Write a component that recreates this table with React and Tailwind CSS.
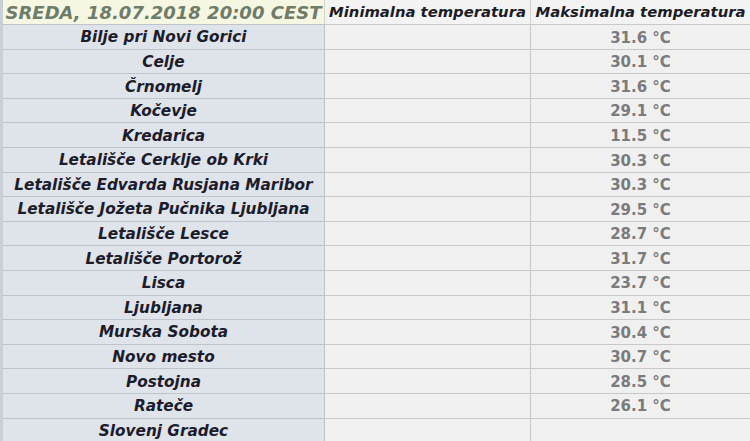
const rows = [
  ['Bilje pri Novi Gorici', '31.6 °C'],
  ['Celje', '30.1 °C'],
  ['Črnomelj', '31.6 °C'],
  ['Kočevje', '29.1 °C'],
  ['Kredarica', '11.5 °C'],
  ['Letališče Cerklje ob Krki', '30.3 °C'],
  ['Letališče Edvarda Rusjana Maribor', '30.3 °C'],
  ['Letališče Jožeta Pučnika Ljubljana', '29.5 °C'],
  ['Letališče Lesce', '28.7 °C'],
  ['Letališče Portorož', '31.7 °C'],
  ['Lisca', '23.7 °C'],
  ['Ljubljana', '31.1 °C'],
  ['Murska Sobota', '30.4 °C'],
  ['Novo mesto', '30.7 °C'],
  ['Postojna', '28.5 °C'],
  ['Rateče', '26.1 °C'],
  ['Slovenj Gradec', ''],
];

const App = () => {
  return (
    <div className="w-[750px] h-[441px] overflow-hidden bg-[#f0f0f0] font-['DejaVu_Sans',sans-serif]">
      <div className="flex border-l-[3px] border-[#c9ced8]">
        <div className="w-[322px] h-[24px] flex items-center justify-center bg-[#f6f7e2] border-r border-[#d4d6c8] text-[18px] font-bold italic text-[#6e7c69] whitespace-nowrap">
          SREDA, 18.07.2018 20:00 CEST
        </div>
        <div className="w-[206px] h-[24px] flex items-center justify-center bg-[#f3f3f3] border-r border-[#cfcfcf] text-[14.8px] font-bold italic text-[#1c1c24] whitespace-nowrap">
          Minimalna temperatura
        </div>
        <div className="flex-1 h-[24px] flex items-center justify-center bg-[#f3f3f3] text-[14.8px] font-bold italic text-[#1c1c24] whitespace-nowrap">
          Maksimalna temperatura
        </div>
      </div>
      {rows.map(([name, max]) => (
        <div key={name} className="flex h-[24.6px] border-l-[3px] border-[#c9ced8]">
          <div className="w-[322px] flex items-center justify-center pt-[2px] bg-[#dfe3ea] border-t border-r border-[#bfc3cb] text-[15.3px] font-bold italic text-[#1c1c2a] whitespace-nowrap">
            {name}
          </div>
          <div className="w-[206px] bg-[#f0f0f0] border-t border-r border-[#c8c8c8]" />
          <div className="flex-1 flex items-center justify-center pt-[2px] bg-[#f0f0f0] border-t border-[#c8c8c8] text-[15px] font-bold text-[#7b7b7b]">
            {max}
          </div>
        </div>
      ))}
    </div>
  );
};

export default App;
